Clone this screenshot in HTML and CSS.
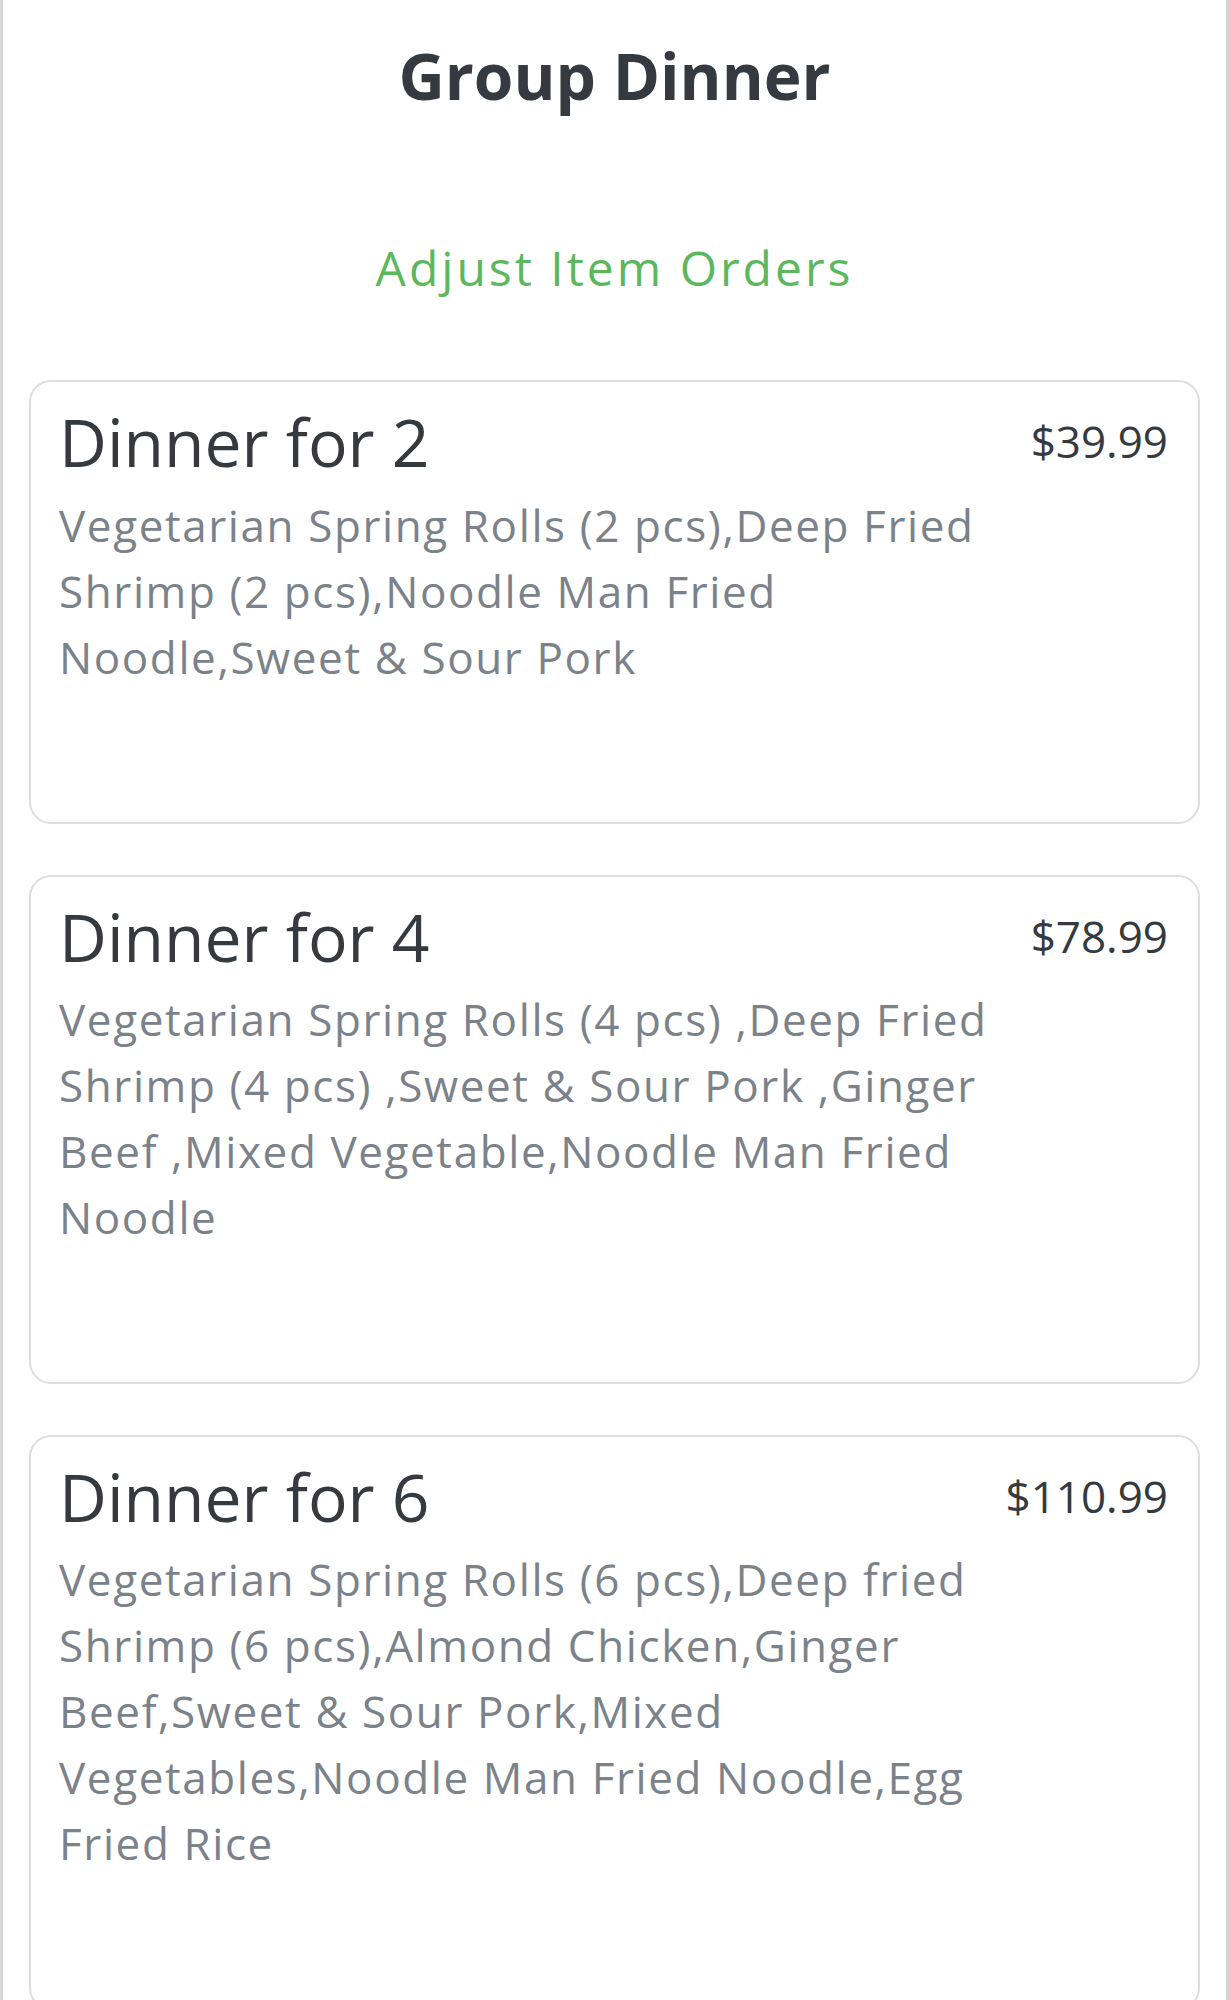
FILE: index.html
```html
<!DOCTYPE html>
<html lang="en">
<head>
    <meta charset="UTF-8">
    <meta name="viewport" content="width=device-width, initial-scale=1.0">
    <title>Group Dinner</title>
    <link rel="stylesheet" href="styles.css">
</head>
<body>

<div class="page">
    <h1 class="page-title">Group Dinner</h1>
    <a class="adjust-link" href="#">Adjust Item Orders</a>

    <div class="menu-list">
        <div class="menu-card">
            <div class="menu-info">
                <h3 class="menu-name">Dinner for 2</h3>
                <p class="menu-desc">Vegetarian Spring Rolls (2 pcs),Deep Fried Shrimp (2 pcs),Noodle Man Fried Noodle,Sweet &amp; Sour Pork</p>
            </div>
            <div class="menu-price">$39.99</div>
        </div>

        <div class="menu-card">
            <div class="menu-info">
                <h3 class="menu-name">Dinner for 4</h3>
                <p class="menu-desc">Vegetarian Spring Rolls (4 pcs) ,Deep Fried Shrimp (4 pcs) ,Sweet &amp; Sour Pork ,Ginger Beef ,Mixed Vegetable,Noodle Man Fried Noodle</p>
            </div>
            <div class="menu-price">$78.99</div>
        </div>

        <div class="menu-card">
            <div class="menu-info">
                <h3 class="menu-name">Dinner for 6</h3>
                <p class="menu-desc">Vegetarian Spring Rolls (6 pcs),Deep fried Shrimp (6 pcs),Almond Chicken,Ginger Beef,Sweet &amp; Sour Pork,Mixed Vegetables,Noodle Man Fried Noodle,Egg Fried Rice</p>
            </div>
            <div class="menu-price">$110.99</div>
        </div>
    </div>
</div>

</body>
</html>
```

FILE: styles.css
```css
* {
    box-sizing: border-box;
}

body {
    margin: 0;
    background-color: #fff;
    font-family: "Open Sans", "Liberation Sans", sans-serif;
    color: #343a40;
}

.page {
    min-height: 100vh;
    border-left: 3px solid #d6d6d6;
    border-right: 3px solid #d6d6d6;
    padding: 38px 26px 0;
    text-align: center;
}

.page-title {
    margin: 0;
    font-size: 64px;
    font-weight: 700;
    line-height: 1.2;
    color: #343a40;
}

.adjust-link {
    display: inline-block;
    margin-top: 124px;
    font-size: 48px;
    line-height: 1.2;
    letter-spacing: 3px;
    color: #5cb85c;
    text-decoration: none;
}

.menu-list {
    margin-top: 84px;
    text-align: left;
}

.menu-card {
    display: flex;
    justify-content: space-between;
    align-items: flex-start;
    border: 2px solid #dedede;
    border-radius: 22px;
    padding: 20px 30px 132px 28px;
    margin-bottom: 51px;
}

.menu-info {
    max-width: 970px;
}

.menu-name {
    margin: 0;
    font-size: 66px;
    font-weight: 400;
    line-height: 1.2;
    color: #343a40;
}

.menu-desc {
    margin: 10px 0 0;
    font-size: 44px;
    line-height: 66px;
    letter-spacing: 1.6px;
    color: #7b828a;
}

.menu-price {
    margin-top: 9px;
    font-size: 44px;
    color: #343a40;
    white-space: nowrap;
}
```
